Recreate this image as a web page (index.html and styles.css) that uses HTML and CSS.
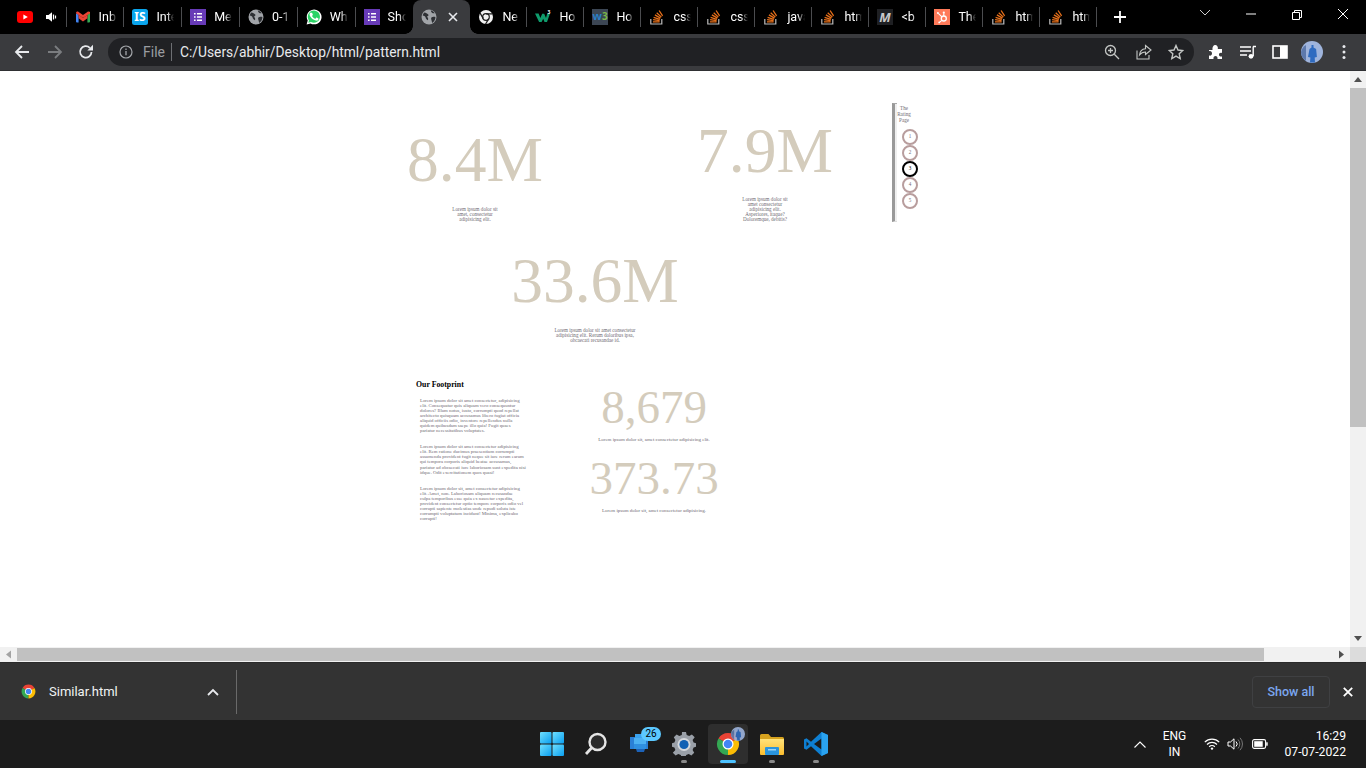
FILE: index.html
```html
<!DOCTYPE html>
<html lang="en">
<head>
<meta charset="utf-8">
<title>pattern.html</title>
<link rel="stylesheet" href="styles.css">
</head>
<body>
<svg class="defs" width="0" height="0" aria-hidden="true">
  <defs>
    <linearGradient id="winA" x1="0" y1="0" x2="1" y2="1"><stop offset="0" stop-color="#6fe0ff"/><stop offset="1" stop-color="#0a9ef0"/></linearGradient>
    <linearGradient id="fold" x1="0" y1="0" x2="0" y2="1"><stop offset="0" stop-color="#ffe27a"/><stop offset="1" stop-color="#fbbd2e"/></linearGradient>
    <symbol id="i-yt" viewBox="0 0 16 16"><rect y="2" width="16" height="12" rx="3" fill="#f00"/><path d="M6.4 5.4 10.8 8l-4.4 2.6z" fill="#fff"/></symbol>
    <symbol id="i-gm" viewBox="0 0 16 16"><path d="M1 13.5V4.200l2.600 1.600v7.700H2a1 1 0 0 1-1-1z" fill="#4285f4"/><path d="M12.400 13.500V5.800L15 4.200v8.300a1 1 0 0 1-1 1z" fill="#34a853"/><path d="M12.400 3.400 15 2.800v1.400l-2.600 1.600z" fill="#fbbc04"/><path d="M3.600 9.200V5.800L8 9l4.400-3.200v3.400L8 12.400z" fill="#ea4335"/><path d="M1 4.200C1 2.800 2.400 2 3.600 2.900L8 6l4.400-3.100c1.200-.9 2.600 0 2.600 1.300L8 9z" fill="#ea4335"/></symbol>
    <symbol id="i-is" viewBox="0 0 16 16"><rect width="16" height="16" rx="2.500" fill="#0aa5ec"/><text x="8" y="12.400" text-anchor="middle" class="is-t">IS</text></symbol>
    <symbol id="i-form" viewBox="0 0 16 16"><rect width="16" height="16" fill="#673ab7"/><path d="M4 4h1.600v1.600H4zM4 7.200h1.600v1.600H4zM4 10.400h1.600V12H4zM7 4h5v1.600H7zM7 7.200h5v1.600H7zM7 10.400h5V12H7z" fill="#fff"/></symbol>
    <symbol id="i-globe" viewBox="0 0 16 16"><circle cx="8" cy="8" r="7.500" fill="#a1a4a8"/><path d="M3.400 3.600c1.600.2 2.600 1 3.800 1.800.6.600.3 1.400-.4 1.600-.7.200-.8 1-.2 1.600.8.700.5 1.700.4 2.600-1.400-.5-2.200-1.700-2.500-3C4.200 7 2.800 6.800 1.700 6.500c.2-1.100.9-2.100 1.700-2.900zM9.800 1.200c1.700.5 3 1.500 3.900 3-.9.300-1.700.2-2.400-.2-.7-.5-1.300-1.500-1.500-2.800zM10.400 8.400c1.100-.7 2.500-.8 4-.3.1 2.300-1.100 4.500-3.100 5.800-.6-1.100-.5-2.200-1-3.300-.3-.7-.3-1.600.1-2.200z" fill="#2e3034"/></symbol>
    <symbol id="i-wa" viewBox="0 0 16 16"><path d="M.6 15.500 1.700 11.600A7.400 7.400 0 1 1 4.500 14.400z" fill="#fff"/><path d="M2.300 13.800 3 11.400A6.100 6.100 0 1 1 5 13.100z" fill="#2bd366"/><path d="M5.900 4.500c-.5 0-1.200.7-1.200 1.800 0 1.200.9 2.400 1 2.500.2.200 1.700 2.600 4.100 3.500 1.900.7 2.300.6 2.800.5.500-.1 1.300-.6 1.400-1.100.1-.5.100-1 0-1.100l-1.800-.9c-.2-.1-.4-.1-.5.100l-.8 1c-.1.200-.3.200-.5.100-1.200-.5-2.300-1.400-3-2.700-.1-.2 0-.3.100-.4l.6-.8c.1-.2.100-.3 0-.5l-.7-1.700c-.2-.3-.3-.3-.5-.3z" fill="#fff" transform="translate(-.9 -.6) scale(.95)"/></symbol>
    <symbol id="i-cm" viewBox="0 0 16 16"><circle cx="8" cy="8" r="7" fill="#f1f1f1"/><circle cx="8" cy="8" r="3.900" fill="#1b1b1b"/><circle cx="8" cy="8" r="2.700" fill="#f1f1f1"/><path d="M8 4.200h6.200l.6 1.300H8zM4.700 9.900 1.600 4.500l.9-1.100 3.400 5.800zM11.300 9.900 8.200 15.300l-1.400-.1 3.400-5.900z" fill="#1b1b1b"/></symbol>
    <symbol id="i-ws" viewBox="0 0 16 16"><path d="M0 4.500h3.600l1.800 4.600 1.800-4.300h2l1.800 4.300 1.200-4.600H15l-3 8.500H9.500L8.200 9.800 6.600 13H4.100z" fill="#0f9b6c"/><text x="12.500" y="5" class="sup">3</text></symbol>
    <symbol id="i-w3" viewBox="0 0 16 16"><rect width="16" height="16" fill="#3c4654"/><text x=".6" y="11.200" class="w3a">w</text><text x="10" y="11.200" class="w3b">3</text></symbol>
    <symbol id="i-so" viewBox="0 0 16 16"><path d="M1.800 10v5h11v-5" fill="none" stroke="#bcbbbb" stroke-width="1.200"/><path d="M4 12.800h6.600M4.100 10.700l6.500.9M4.600 8.400l6.300 1.900M5.900 5.900l5.600 3.200M7.700 3.700l4.700 4.400M10.100 1.500l3.500 5.300" fill="none" stroke="#e8701a" stroke-width="1.300"/></symbol>
    <symbol id="i-m" viewBox="0 0 16 16"><rect width="16" height="16" fill="#1f2023"/><text x="8" y="12.500" text-anchor="middle" class="m-t">M</text></symbol>
    <symbol id="i-hs" viewBox="0 0 16 16"><rect width="16" height="16" fill="#ff7a59"/><circle cx="9.800" cy="9.500" r="2.500" fill="none" stroke="#fff" stroke-width="1.300"/><path d="M9.800 7V4.400M4.300 4.300l3.600 3.500M7.800 11.300l-2 1.900" stroke="#fff" stroke-width="1.100" fill="none"/><circle cx="9.800" cy="3.700" r="1.100" fill="#fff"/><circle cx="3.900" cy="3.900" r="1" fill="#fff"/><circle cx="5.200" cy="13.400" r=".9" fill="#fff"/></symbol>
    <symbol id="i-chrome" viewBox="0 0 24 24"><path d="M12 12 2.470 6.500A11 11 0 0 1 21.530 6.500z" fill="#ea4335"/><path d="M12 12 2.470 6.500A11 11 0 0 0 12 23z" fill="#34a853"/><path d="M12 12 21.530 6.500A11 11 0 0 1 12 23z" fill="#fbbc04"/><circle cx="12" cy="12" r="5.500" fill="#fff"/><circle cx="12" cy="12" r="4.300" fill="#4285f4"/></symbol>
    <symbol id="i-avatar" viewBox="0 0 22 22"><circle cx="11" cy="11" r="11" fill="#9fb4dc"/><path d="M0 11a11 11 0 0 0 5 9V4a11 11 0 0 0-5 7z" fill="#5d79ac"/><path d="M10.500 4h2v2.600l2.600 1.400.8 8-2.200.4.300 5h-5l.4-5-2.400-.5 1.500-8 2-1.300z" fill="#2f6bc0"/></symbol>
  </defs>
</svg>

<header class="tabstrip">
  <div class="tab tab-wide"><svg class="fav"><use href="#i-yt"/></svg><svg class="audio" viewBox="0 0 12 12"><path d="M0 4h2.500L6 1.200v9.600L2.500 8H0z" fill="#fff"/><path d="M7.500 3.500v5M9.500 4.500v3" stroke="#fff" stroke-width="1.200"/></svg></div>
  <div class="tab tab-wide"><svg class="fav"><use href="#i-gm"/></svg><span class="title">Inb</span></div>
  <div class="tab tab-wide"><svg class="fav"><use href="#i-is"/></svg><span class="title">Inte</span></div>
  <div class="tab tab-wide"><svg class="fav"><use href="#i-form"/></svg><span class="title">Me</span></div>
  <div class="tab tab-wide"><svg class="fav"><use href="#i-globe"/></svg><span class="title">0-1</span></div>
  <div class="tab tab-wide"><svg class="fav"><use href="#i-wa"/></svg><span class="title">Wh</span></div>
  <div class="tab tab-wide tab-nosep"><svg class="fav"><use href="#i-form"/></svg><span class="title">Sho</span></div>
  <div class="tab tab-active"><svg class="fav"><use href="#i-globe"/></svg><svg class="tab-x" viewBox="0 0 10 10"><path d="M1 1l8 8M9 1l-8 8" stroke="#e8eaed" stroke-width="1.600"/></svg></div>
  <div class="tab"><svg class="fav"><use href="#i-cm"/></svg><span class="title">Ne</span></div>
  <div class="tab"><svg class="fav"><use href="#i-ws"/></svg><span class="title">Ho</span></div>
  <div class="tab"><svg class="fav"><use href="#i-w3"/></svg><span class="title">Ho</span></div>
  <div class="tab"><svg class="fav"><use href="#i-so"/></svg><span class="title">css</span></div>
  <div class="tab"><svg class="fav"><use href="#i-so"/></svg><span class="title">css</span></div>
  <div class="tab"><svg class="fav"><use href="#i-so"/></svg><span class="title">java</span></div>
  <div class="tab"><svg class="fav"><use href="#i-so"/></svg><span class="title">htm</span></div>
  <div class="tab"><svg class="fav"><use href="#i-m"/></svg><span class="title">&lt;b</span></div>
  <div class="tab"><svg class="fav"><use href="#i-hs"/></svg><span class="title">The</span></div>
  <div class="tab"><svg class="fav"><use href="#i-so"/></svg><span class="title">htm</span></div>
  <div class="tab"><svg class="fav"><use href="#i-so"/></svg><span class="title">htm</span></div>
  <svg class="newtab" viewBox="0 0 12 12"><path d="M6 0v12M0 6h12" stroke="#fff" stroke-width="1.800"/></svg>
  <div class="winctl">
    <svg class="wc" viewBox="0 0 46 34"><path d="M18 10l5 5 5-5" fill="none" stroke="#ccc"/></svg>
    <svg class="wc" viewBox="0 0 46 34"><path d="M18 14h10" stroke="#fff"/></svg>
    <svg class="wc" viewBox="0 0 46 34"><path d="M18.500 12.500h7v7h-7zM20.500 12.500v-2h7v7h-2" fill="none" stroke="#fff"/></svg>
    <svg class="wc" viewBox="0 0 46 34"><path d="M18 9l10 10M28 9L18 19" stroke="#fff"/></svg>
  </div>
</header>

<nav class="toolbar">
  <svg class="tb tb-back" viewBox="0 0 16 16"><path d="M15 8H2M8 2 2 8l6 6" fill="none" stroke="#e8eaed" stroke-width="1.800"/></svg>
  <svg class="tb tb-fwd" viewBox="0 0 16 16"><path d="M1 8h13M8 2l6 6-6 6" fill="none" stroke="#7b7d80" stroke-width="1.800"/></svg>
  <svg class="tb tb-rel" viewBox="0 0 16 16"><path d="M13.500 8A5.700 5.700 0 1 1 11.800 3.800" fill="none" stroke="#e8eaed" stroke-width="1.800"/><path d="M9.300 6.400H15V.8z" fill="#e8eaed"/></svg>
  <div class="omni">
    <svg class="om-info" viewBox="0 0 14 14"><circle cx="7" cy="7" r="6" fill="none" stroke="#a4a7ab" stroke-width="1.200"/><path d="M7 6v4.200M7 3.600v1.400" stroke="#a4a7ab" stroke-width="1.300"/></svg>
    <span class="om-file">File</span>
    <span class="om-sep"></span>
    <span class="om-url">C:/Users/abhir/Desktop/html/pattern.html</span>
    <span class="om-actions">
      <svg class="om-ic" viewBox="0 0 16 16"><circle cx="6.500" cy="6.500" r="5" fill="none" stroke="#c4c7c5" stroke-width="1.300"/><path d="M10.300 10.300 15 15M4 6.500h5M6.500 4v5" stroke="#c4c7c5" stroke-width="1.300"/></svg>
      <svg class="om-ic" viewBox="0 0 16 16"><path d="M1 6.500V15h12v-4" fill="none" stroke="#c4c7c5" stroke-width="1.100"/><path d="M9.500 1.500 15 6l-5.500 4.500V8C7 8 5 9 3.500 11c.3-3.500 2.500-6 6-6.300z" fill="none" stroke="#c4c7c5" stroke-width="1.100"/></svg>
      <svg class="om-ic" viewBox="0 0 16 16"><path d="M8 1.500 10 6l4.800.5-3.600 3.300 1 4.800L8 12.100l-4.200 2.500 1-4.800L1.200 6.500 6 6z" fill="none" stroke="#c4c7c5" stroke-width="1.400"/></svg>
    </span>
  </div>
  <div class="tb-right">
    <svg class="tr" viewBox="0 0 16 16"><path d="M1 6h3.500C4 3 5.500 1 7.200 1S10.400 3 9.800 5H14v4c-2.300-.6-3 .7-3 1.700s1 2.300 3 1.800V15H9.500c.4-2-.8-3-2-3s-2.400 1-2 3H1v-3.500c2 .5 3-.5 3-2S3 6.800 1 7.200z" fill="#fff"/></svg>
    <svg class="tr" viewBox="0 0 16 16"><path d="M0 3h11M0 7h11M0 11h7" stroke="#fff" stroke-width="1.300"/><path d="M13 2.500h3M13.200 2.500V12" stroke="#fff" stroke-width="1.400" fill="none"/><circle cx="11" cy="12.300" r="2.400" fill="#fff"/></svg>
    <svg class="tr" viewBox="0 0 16 16"><rect x="1" y="2" width="14" height="12" fill="none" stroke="#fff" stroke-width="1.600"/><rect x="8" y="2" width="7" height="12" fill="#fff"/></svg>
    <svg class="tr-av"><use href="#i-avatar"/></svg>
    <svg class="tr-dots" viewBox="0 0 4 16"><circle cx="2" cy="2.500" r="1.500" fill="#e8eaed"/><circle cx="2" cy="8" r="1.500" fill="#e8eaed"/><circle cx="2" cy="13.500" r="1.500" fill="#e8eaed"/></svg>
  </div>
</nav>

<div class="viewport">
  <main class="page">
    <section class="row-top">
      <div class="stat stat-a">
        <div class="big">8.4M</div>
        <p class="cap">Lorem ipsum dolor sit<br>amet, consectetur<br>adipisicing elit.</p>
      </div>
      <div class="stat stat-b">
        <div class="big">7.9M</div>
        <p class="cap">Lorem ipsum dolor sit<br>amet consectetur<br>adipisicing elit.<br>Asperiores, itaque?<br>Doloremque, debitis?</p>
      </div>
      <aside class="rating">
        <div class="rating-bar"></div>
        <div class="rating-body">
          <div class="rating-title">The<br>Rating<br>Page</div>
          <ol class="dots">
            <li class="dot">1</li>
            <li class="dot">2</li>
            <li class="dot dot-on">3</li>
            <li class="dot">4</li>
            <li class="dot">5</li>
          </ol>
        </div>
      </aside>
    </section>
    <section class="stat stat-c">
      <div class="big">33.6M</div>
      <p class="cap">Lorem ipsum dolor sit amet consectetur<br>adipisicing elit. Rerum doloribus ipsa,<br>obcaecati recusandae id.</p>
    </section>
    <section class="foot">
      <div class="foot-text">
        <h2 class="foot-h">Our Footprint</h2>
        <p class="para">Lorem ipsum dolor sit amet consectetur, adipisicing<br>elit. Consequatur quis aliquam vero consequuntur<br>dolores? Illum notus, iusto, corrumpti quod repellat<br>architecto quisquam accusamus libero fugiat officia<br>aliquid officiis odio, inventore repellendus nulla<br>quidem quibusdam saepe illo quia! Fugit quaes<br>pariatur necessitatibus voluptates.</p>
        <p class="para">Lorem ipsum dolor sit amet consectetur adipisicing<br>elit. Rem ratione ducimus praesentium corrumpti<br>assumenda provident fugit neque sit iure rerum earum<br>qui tempora corporis aliquid beatae accusamus,<br>pariatur ad obcaecati iure laboriosam sunt expedita nisi<br>idque. Odit exercitationem quos quasi!</p>
        <p class="para">Lorem ipsum dolor sit, amet consectetur adipisicing<br>elit. Amet, non. Laboriosam aliquam recusandae<br>culpa temporibus esse quia ex nascetur expedita,<br>provident consectetur optio tempore corporis odio vel<br>corrupti sapiente molestias unde repudi soluta iste<br>corrumpti voluptatum incidunt! Minima, explicabo<br>corrupti!</p>
      </div>
      <div class="foot-stats">
        <div class="mid">8,679</div>
        <p class="cap cap-one">Lorem ipsum dolor sit, amet consectetur adipisicing elit.</p>
        <div class="mid mid-b">373.73</div>
        <p class="cap cap-two">Lorem ipsum dolor sit, amet consectetur adipisicing.</p>
      </div>
    </section>
  </main>
  <div class="vscroll">
    <svg class="sb-arrow" viewBox="0 0 16 17"><path d="M8 6l4 5H4z" fill="#505050"/></svg>
    <div class="vtrack"><div class="vthumb"></div></div>
    <svg class="sb-arrow" viewBox="0 0 16 17"><path d="M8 11 4 6h8z" fill="#505050"/></svg>
  </div>
</div>
<div class="hscroll">
  <svg class="sb-harrow" viewBox="0 0 17 15"><path d="M6 7.500 11 3.500v8z" fill="#a3a3a3"/></svg>
  <div class="htrack"><div class="hthumb"></div></div>
  <svg class="sb-harrow" viewBox="0 0 17 15"><path d="M11 7.500 6 3.500v8z" fill="#505050"/></svg>
  <div class="corner"></div>
</div>

<section class="downloads">
  <div class="dl-item">
    <svg class="dl-ic"><use href="#i-chrome"/></svg>
    <span class="dl-name">Similar.html</span>
    <svg class="dl-chev" viewBox="0 0 12 8"><path d="M1 7l5-5 5 5" fill="none" stroke="#e8eaed" stroke-width="1.800"/></svg>
  </div>
  <span class="dl-sep"></span>
  <button class="dl-all">Show all</button>
  <svg class="dl-x" viewBox="0 0 10 10"><path d="M.8.8l8.400 8.400M9.200.8.800 9.200" stroke="#fff" stroke-width="1.800"/></svg>
</section>

<footer class="taskbar">
  <div class="tk-left"></div>
  <div class="tk-apps">
    <div class="app"><svg class="app-ic" viewBox="0 0 24 24"><rect x="0" y="0" width="11.500" height="11.500" rx="1" fill="url(#winA)"/><rect x="12.500" y="0" width="11.500" height="11.500" rx="1" fill="url(#winA)"/><rect x="0" y="12.500" width="11.500" height="11.500" rx="1" fill="url(#winA)"/><rect x="12.500" y="12.500" width="11.500" height="11.500" rx="1" fill="url(#winA)"/></svg></div>
    <div class="app"><svg class="app-ic" viewBox="0 0 24 24"><circle cx="13.500" cy="10" r="8" fill="#2a2a2a" stroke="#e4e4e4" stroke-width="2.400"/><path d="M7.500 16 2 22" stroke="#e4e4e4" stroke-width="2.800"/></svg></div>
    <div class="app app-chat"><svg class="app-ic" viewBox="0 0 24 24"><path d="M2 5h18v12H2z" fill="#2a7fd6"/><path d="M7 2h11v5H7z" fill="#3aa2ee"/><path d="M6 6h12v6H6z" fill="#4cb0f2"/><path d="M6 12h12v5H6z" fill="#2f8fe0"/><path d="M8 17h9l-1 3H9z" fill="#1c62b8"/></svg><span class="badge">26</span></div>
    <div class="app app-dot"><svg class="app-ic" viewBox="0 0 24 24"><path d="M10 0h4l.7 3 2.500 1 2.700-1.600 2.800 2.800L20.600 8l1 2.500 2.400.7v3.600l-2.400.7-1 2.500 1.600 2.800-2.800 2.800-2.700-1.600-2.500 1-.7 2h-4l-.7-2-2.500-1-2.700 1.600-2.800-2.800L3.400 18l-1-2.500-2.400-.7v-3.600l2.400-.7 1-2.500L1.800 5.200l2.800-2.800L7.300 4l2.500-1z" fill="#9aa0a8"/><circle cx="12" cy="12.500" r="6.500" fill="#d6d9dd"/><circle cx="12" cy="12.500" r="4.600" fill="#1261b4"/></svg></div>
    <div class="app app-on"><svg class="app-ic"><use href="#i-chrome"/></svg><svg class="app-av"><use href="#i-avatar"/></svg></div>
    <div class="app app-dot"><svg class="app-ic" viewBox="0 0 24 24"><path d="M0 3.500A1.500 1.500 0 0 1 1.500 2h7l2.500 3h11.500A1.500 1.500 0 0 1 24 6.500V9H0z" fill="#d6a21e"/><path d="M0 7h24v15a1 1 0 0 1-1 1H1a1 1 0 0 1-1-1z" fill="url(#fold)"/><rect x="5" y="15" width="14" height="8" rx="1" fill="#2a94dc"/><rect x="8" y="17" width="8" height="1.500" fill="#9ad4f5"/></svg></div>
    <div class="app app-dot"><svg class="app-ic" viewBox="0 0 24 24"><path d="M17.500 0 24 3v18l-6.500 3L7 14.200 2.500 17.800 0 16.500v-9L2.500 6.200 7 9.800z" fill="#0e7fd2"/><path d="M17.500 6.500 10 12l7.500 5.500z" fill="#1c1c1c"/><path d="M17.500 0 24 3v18l-6.500 3z" fill="#2aa3f0"/><path d="M2.500 9.500 5 12l-2.500 2.500z" fill="#1c1c1c"/></svg></div>
  </div>
  <div class="tray">
    <svg class="tray-chev" viewBox="0 0 12 7"><path d="M.5 6.500 6 1l5.500 5.500" fill="none" stroke="#fff" stroke-width="1.100"/></svg>
    <div class="lang">ENG<br>IN</div>
    <svg class="tray-wifi" viewBox="0 0 16 12"><path d="M.8 4.200a10 10 0 0 1 14.400 0M3 6.500a7 7 0 0 1 10 0M5.200 8.700a4 4 0 0 1 5.600 0" fill="none" stroke="#fff" stroke-width="1.200"/><circle cx="8" cy="10.600" r="1.200" fill="#fff"/></svg>
    <svg class="tray-vol" viewBox="0 0 16 14"><path d="M1 5h2.500L7 1.800v10.400L3.500 9H1z" fill="none" stroke="#fff"/><path d="M9 4.500a3.500 3.500 0 0 1 0 5" fill="none" stroke="#fff"/><path d="M11 2.500a6.500 6.500 0 0 1 0 9M13 .8a9 9 0 0 1 0 12.400" fill="none" stroke="#777"/></svg>
    <svg class="tray-bat" viewBox="0 0 16 10"><rect x=".6" y=".6" width="13" height="8.800" rx="1.600" fill="none" stroke="#fff" stroke-width="1.100"/><rect x="2.200" y="2.200" width="8.500" height="5.600" fill="#fff"/><rect x="14.200" y="3.300" width="1.500" height="3.400" fill="#fff"/></svg>
    <div class="clock">16:29<br>07-07-2022</div>
  </div>
</footer>
</body>
</html>
```
FILE: styles.css
```css
* { box-sizing: border-box; }
html, body { margin: 0; padding: 0; height: 768px; overflow: hidden; background: #fff; }
body { font-family: Roboto, "Noto Sans", sans-serif; display: flex; flex-direction: column; width: 1366px; }
.defs { position: absolute; }
svg { display: block; flex: none; }
.is-t { font: bold 12px "Noto Sans", sans-serif; fill: #fff; }
.sup { font: bold 5px "Noto Sans", sans-serif; fill: #fff; }
.w3a { font: bold 11px "Noto Sans", sans-serif; fill: #2a7fc4; }
.w3b { font: bold 10px "Noto Sans", sans-serif; fill: #7ab648; }
.m-t { font: italic bold 13px "Noto Sans", sans-serif; fill: #c9c9c9; }

/* tab strip */
.tabstrip { height: 34px; background: #000; display: flex; align-items: stretch; padding-left: 8.8px; flex: none; }
.tab { width: 57px; flex: none; position: relative; display: flex; align-items: center; padding-left: 8px; padding-bottom: 1px; color: #fff; }
.tab::after { content: ""; position: absolute; right: 0; top: 7px; height: 20px; width: 1px; background: #4b4c4f; }
.tab-wide { width: 57.8px; }
.tab-nosep::after { display: none; }
.fav { width: 16px; height: 16px; }
.audio { width: 12px; height: 12px; margin-left: 13px; }
.title { margin-left: 8px; width: 18px; overflow: hidden; white-space: nowrap; font-size: 12.500px; line-height: 18px;
  -webkit-mask-image: linear-gradient(90deg, #000 60%, transparent); mask-image: linear-gradient(90deg, #000 60%, transparent); }
.tab-active { background: #3a3b3e; border-radius: 8px 8px 0 0; justify-content: space-between; padding-right: 12px; }
.tab-active::before, .tab-active::after { content: ""; position: absolute; bottom: 0; top: auto; width: 8px; height: 8px; background: radial-gradient(circle at 0 0, transparent 7.500px, #3a3b3e 8px); }
.tab-active::before { left: -8px; }
.tab-active::after { right: -8px; background: radial-gradient(circle at 100% 0, transparent 7.500px, #3a3b3e 8px); }
.tab-x { width: 10px; height: 10px; }
.newtab { width: 12px; height: 12px; margin: 11px 0 0 16.500px; }
.winctl { margin-left: auto; display: flex; align-items: flex-start; }
.wc { width: 46px; height: 34px; }

/* toolbar */
.toolbar { height: 37px; background: #3a3b3e; display: flex; align-items: center; flex: none; position: relative; border-bottom: 1px solid #2f3033; }
.tb { width: 16px; height: 16px; }
.tb-back { margin-left: 14px; }
.tb-fwd { margin-left: 17px; }
.tb-rel { margin-left: 15px; }
.omni { margin-left: 14px; width: 1086px; height: 28px; border-radius: 14px; background: #202124; display: flex; align-items: center; padding-left: 11px; }
.om-info { width: 14px; height: 14px; }
.om-file { margin-left: 10px; color: #9a9da1; font-size: 14px; line-height: 18px; width: 24px; }
.om-sep { width: 1px; height: 18px; background: #6d6f73; margin-left: 4px; }
.om-url { margin-left: 8px; color: #e8eaed; font-size: 13.800px; line-height: 18px; white-space: nowrap; }
.om-actions { margin-left: auto; display: flex; gap: 16px; padding-right: 10px; }
.om-ic { width: 16px; height: 16px; }
.tb-right { display: flex; align-items: center; margin-left: 14px; }
.tr { width: 16px; height: 16px; margin-right: 16px; }
.tr-av { width: 22px; height: 22px; margin-left: -3px; }
.tr-dots { width: 4px; height: 16px; margin-left: 19px; }

/* viewport */
.viewport { height: 576px; display: flex; flex: none; background: #fff; }
.page { flex: 1; min-width: 0; padding: 32px 0 0 390px; font-family: "Liberation Serif", "Times New Roman", serif; overflow: hidden; }
.row-top { display: flex; align-items: flex-end; height: 119px; }
.stat { text-align: center; }
.stat-a { width: 170px; }
.stat-b { width: 170px; margin-left: 120px; }
.big { color: #d4ccbc; font-size: 63.500px; line-height: 74px; white-space: nowrap; }
.cap { color: #6f6a74; font-size: 5.100px; line-height: 5px; margin: 0; }
.stat-a .big { margin-bottom: 10px; }
.stat-b .big { margin-bottom: 9px; }
.rating { height: 119px; margin-left: 42px; display: flex; color: #6f6a74; font-size: 5.100px; }
.rating-bar { width: 5px; height: 119px; background: #efefef; border-left: 3.500px solid #999; border-top: 1px solid #aaa; border-bottom: 1px solid #ddd; }
.rating-title { text-align: center; line-height: 6px; width: 14px; margin-left: 0; padding-top: 2px; }
.dots { list-style: none; margin: 6px 0 0 5px; padding: 0; display: flex; flex-direction: column; }
.dot { width: 16px; height: 16px; border: 2px solid #b89d9d; border-radius: 50%; display: flex; align-items: center; justify-content: center; line-height: 1; }
.dot-on { border-color: #000; color: #000; }
.stat-c { width: 410px; margin-top: 22px; }
.stat-c .big { margin-bottom: 10px; }
.foot { display: grid; grid-template-columns: 163px 150px; margin-top: 37px; margin-left: 26px; }
.foot-h { font-size: 7.800px; line-height: 10px; margin: 0 0 7.500px; color: #000; font-weight: bold; }
.para { color: #6f6a74; font-size: 4.800px; line-height: 5.100px; margin: 0 0 11px 4px; white-space: nowrap; }
.foot-stats { text-align: center; width: 150px; padding-top: 2px; }
.mid { color: #d4ccbc; font-size: 47px; line-height: 50px; }
.cap-one { margin-top: 4.500px; white-space: nowrap; font-size: 4.950px; }
.mid-b { margin-top: 11px; }
.cap-two { margin-top: 5px; white-space: nowrap; font-size: 4.950px; }

/* scrollbars */
.vscroll { width: 16px; background: #f1f1f1; display: flex; flex-direction: column; flex: none; }
.sb-arrow { width: 16px; height: 17px; }
.vtrack { flex: 1; }
.vthumb { height: 339px; background: #c1c1c1; }
.hscroll { height: 15px; display: flex; background: #f1f1f1; flex: none; }
.sb-harrow { width: 17px; height: 15px; }
.htrack { flex: 1; display: flex; padding: 1px 0; }
.hthumb { width: 1247px; background: #c1c1c1; }
.corner { width: 16px; background: #dcdcdc; }

/* downloads */
.downloads { height: 58px; background: #333; border-top: 1px solid #2a2a2a; display: flex; align-items: center; flex: none; }
.dl-item { display: flex; align-items: center; }
.dl-ic { width: 15px; height: 15px; margin-left: 21px; }
.dl-name { margin-left: 13px; color: #f1f3f4; font-size: 13px; width: 139px; white-space: nowrap; }
.dl-chev { width: 12px; height: 8px; margin-left: 19px; }
.dl-sep { width: 1px; height: 44px; background: #6a6a6a; margin-left: 17px; }
.dl-all { margin-left: auto; width: 78px; height: 32px; border: 1px solid #3f4042; border-radius: 4px; background: transparent; color: #7ba7f0; font: 500 12.500px/30px Roboto, sans-serif; padding: 0; }
.dl-x { width: 10px; height: 10px; margin: 0 13px 0 13px; }

/* taskbar */
.taskbar { height: 48px; background: #1c1c1c; display: grid; grid-template-columns: 1fr auto 1fr; align-items: center; flex: none; }
.tk-apps { display: flex; align-items: center; margin-left: 2px; }
.app { width: 44px; height: 40px; display: flex; align-items: center; justify-content: center; position: relative; }
.app-ic { width: 24px; height: 24px; }
.app-dot::after, .app-on::after { content: ""; position: absolute; bottom: 1px; left: 50%; margin-left: -3px; width: 6px; height: 3px; border-radius: 2px; background: #8a8a8a; }
.app-on { width: 40px; margin: 0 2px; border-radius: 4px; background: #2e2e2e; }
.app-on::after { width: 16px; margin-left: -8px; background: #4cc2ff; }
.app-av { position: absolute; right: 3px; top: 3px; width: 14px; height: 14px; opacity: .9; }
.badge { position: absolute; right: 1px; top: 3px; min-width: 20px; height: 14px; border-radius: 8px; background: #5cc8ff; color: #000; font-size: 10px; line-height: 14px; text-align: center; }
.tray { display: flex; align-items: center; justify-self: end; color: #fff; font-size: 12px; line-height: 16px; }
.tray-chev { width: 12px; height: 7px; }
.lang { margin-left: 11px; text-align: center; width: 34px; }
.tray-wifi { width: 16px; height: 12px; margin-left: 13px; }
.tray-vol { width: 16px; height: 14px; margin-left: 7px; }
.tray-bat { width: 16px; height: 10px; margin-left: 9px; }
.clock { text-align: right; margin: 0 20px 0 16px; font-size: 12.200px; }
```
